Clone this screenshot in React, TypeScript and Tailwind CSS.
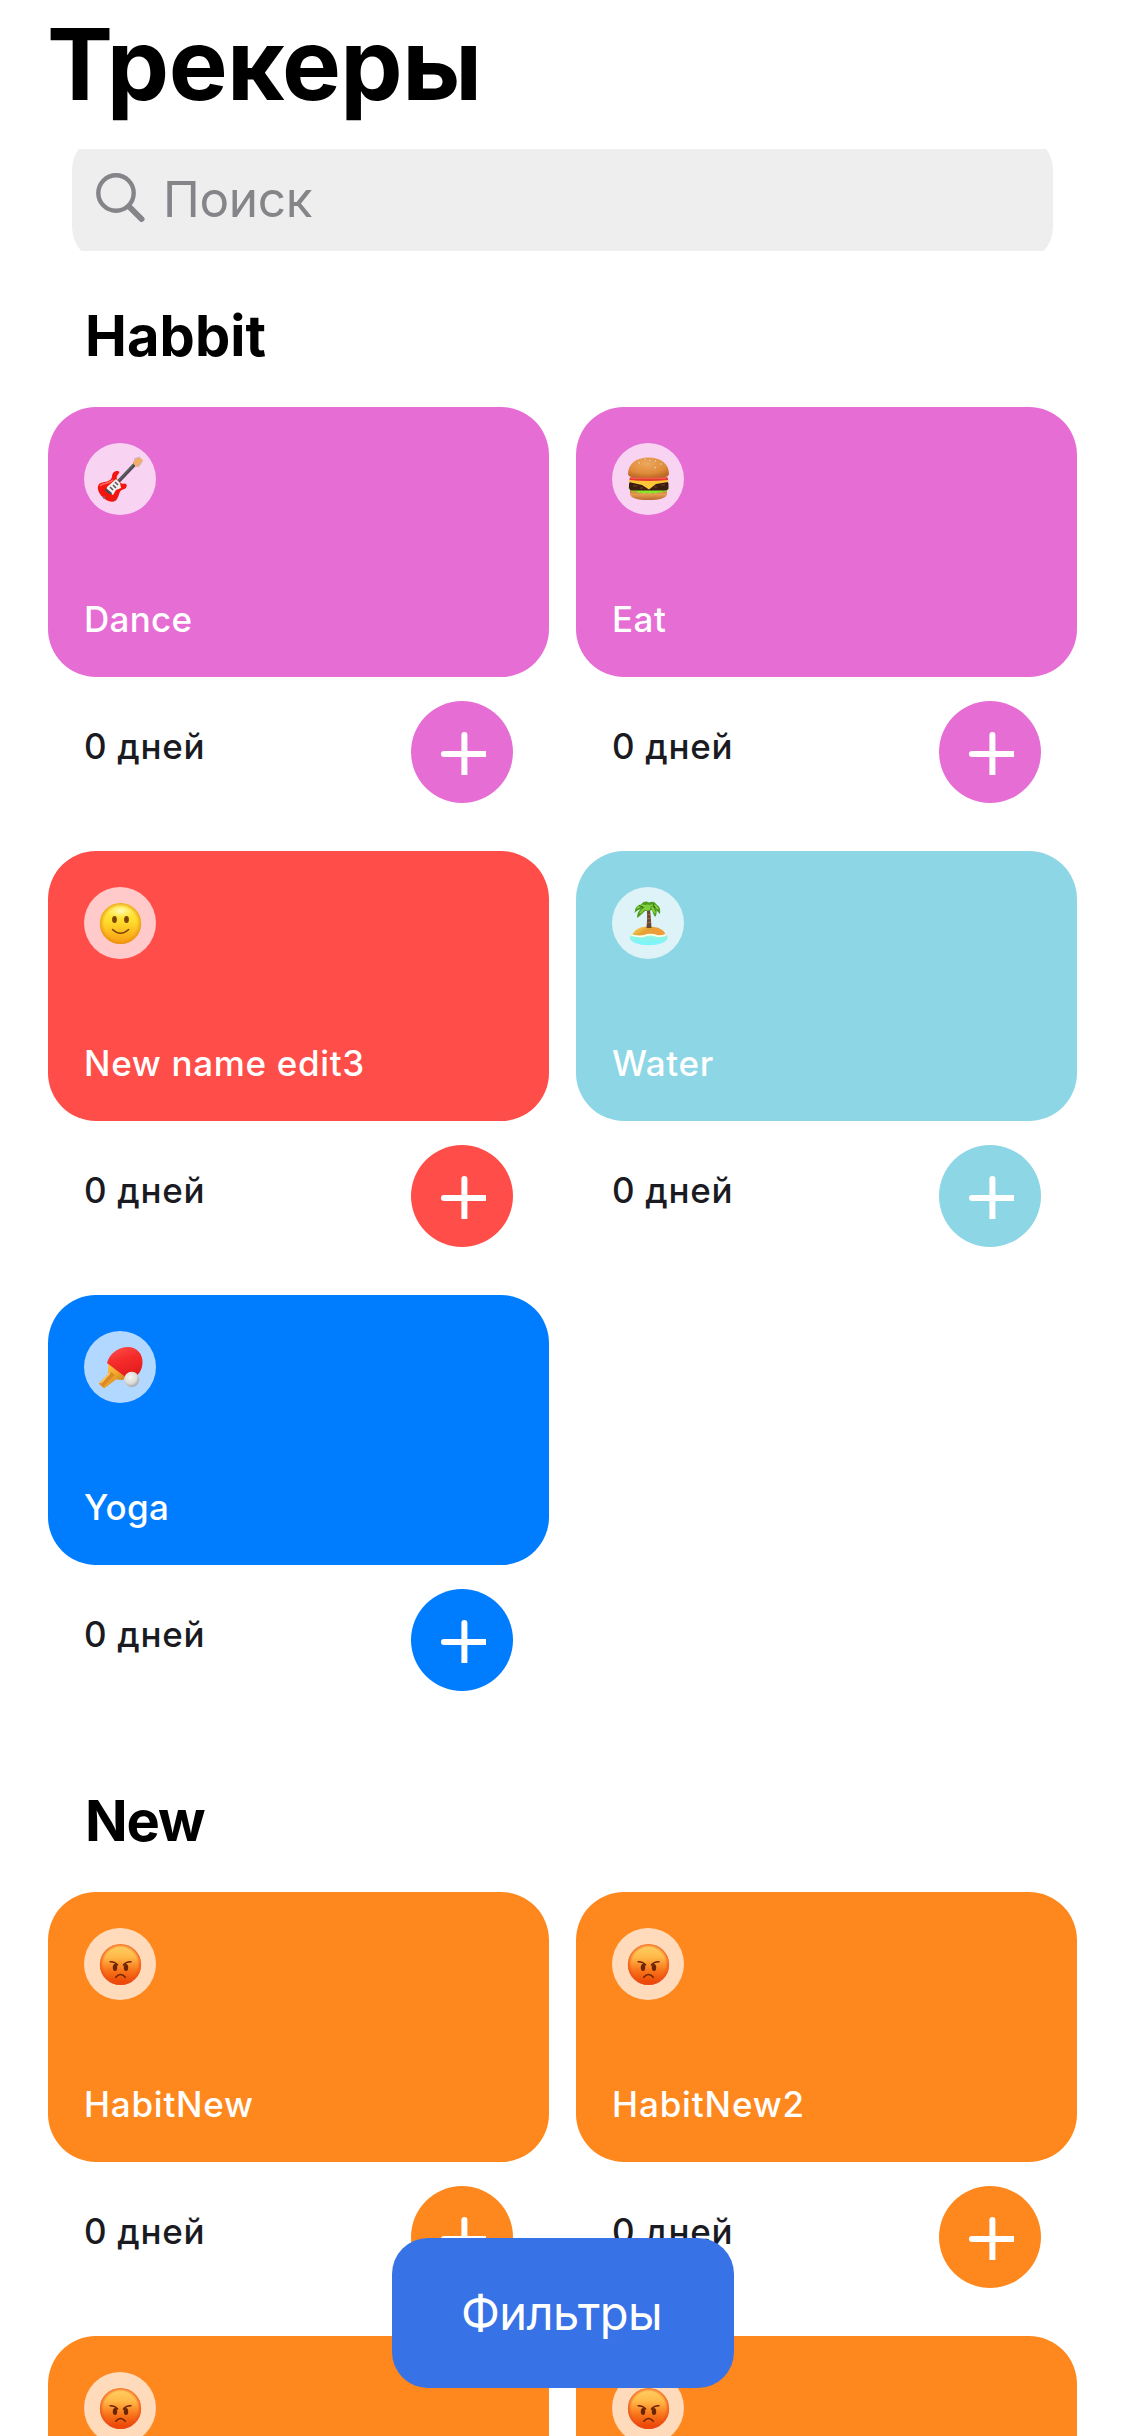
import type { ReactElement } from 'react'

type Emoji = 'guitar' | 'burger' | 'smile' | 'island' | 'paddle' | 'angry'

interface Tracker {
  name?: string
  emoji: Emoji
  color: string
  tracking?: string
}

interface Category {
  title: string
  tracking: string
  trackers: Tracker[]
}

const categories: Category[] = [
  {
    title: 'Habbit',
    tracking: 'tracking-[0.1px]',
    trackers: [
      { name: 'Dance', emoji: 'guitar', color: 'bg-[#e66dd4]', tracking: 'tracking-[0.28px]' },
      { name: 'Eat', emoji: 'burger', color: 'bg-[#e66dd4]', tracking: 'tracking-[0.5px]' },
      { name: 'New name edit3', emoji: 'smile', color: 'bg-[#ff4d4a]', tracking: 'tracking-[0.67px]' },
      { name: 'Water', emoji: 'island', color: 'bg-[#8dd6e5]', tracking: 'tracking-[0.6px]' },
      { name: 'Yoga', emoji: 'paddle', color: 'bg-[#007cff]', tracking: 'tracking-[0.3px]' },
    ],
  },
  {
    title: 'New',
    tracking: 'tracking-[-1.1px]',
    trackers: [
      { name: 'HabitNew', emoji: 'angry', color: 'bg-[#ff881e]', tracking: 'tracking-[0.75px]' },
      { name: 'HabitNew2', emoji: 'angry', color: 'bg-[#ff881e]', tracking: 'tracking-[0.85px]' },
      // The last row peeks out from under the bottom edge, so only its emoji is shown.
      { emoji: 'angry', color: 'bg-[#ff881e]' },
      { emoji: 'angry', color: 'bg-[#ff881e]' },
    ],
  },
]

const drawings: Record<Emoji, ReactElement> = {
  guitar: (
    <>
      <path d="M33 40 L52 20" stroke="#4a4a50" strokeWidth="3.4" />
      <path d="M34 38 L52 19" stroke="#77777d" strokeWidth="0.8" />
      <path d="M49 20 Q50 15 55 14 L58 16 L59 18 L57 20 Q57 23 52 24 Z" fill="#f2ad6c" />
      <path d="M50 16 L56 14 M54 24 L58 19" stroke="#c4b8c6" strokeWidth="1.2" />
      <path
        d="M28 34 C28 29 32 27 35 28.5 C36 30 34 31 33 33 C32 36 34 38 36 39.5 C38 41 39 41 41 40.5 C44 41 43 46 39 46.5 C35 48 36 50 34 54 C32 60 26 60 21 56 C15 52 12 45 15 41 C19 38 26 40 28 34 Z"
        fill="#f5150f"
      />
      <path d="M16 43 C18 40 25 41 29 37" fill="none" stroke="#ff6a5c" strokeWidth="1.6" />
      <path d="M23 44 L32 36 L36 40 L37 45 L32 47 L29 52 L22 48 Z" fill="#f4efef" />
      <path d="M26 44 L29 47 M29 42 L32 45 M31 39 L34 42" stroke="#56545c" strokeWidth="1.5" />
      <path d="M22 45 L28 50 L27 52 L21 48 Z" fill="#4d4d55" />
      <circle cx="20" cy="54.5" r="1.2" fill="#7a6a7a" />
      <circle cx="30" cy="56" r="0.9" fill="#a93838" />
    </>
  ),
  burger: (
    <>
      <defs>
        <radialGradient id="bun" cx="0.45" cy="0.3" r="0.75">
          <stop offset="0" stopColor="#f0a75a" />
          <stop offset="0.65" stopColor="#df8b3a" />
          <stop offset="1" stopColor="#b96724" />
        </radialGradient>
        <linearGradient id="heel" x1="0" y1="0" x2="0" y2="1">
          <stop offset="0" stopColor="#b8702e" />
          <stop offset="0.5" stopColor="#e69b50" />
          <stop offset="1" stopColor="#b86a2c" />
        </linearGradient>
      </defs>
      <path d="M18 46 H55 V51 Q54 57 36.500 57 Q19 57 18 51 Z" fill="url(#heel)" />
      <path
        d="M16 45 Q17 42 21 44 H53 Q57 43 57 46 Q55 47 54 49 Q51 47 49 50 Q46 48 44 51 Q41 49 38 51 Q35 49 32 51 Q29 49 26 50 Q24 47 21 49 Q19 47 16 45 Z"
        fill="#8be72c"
      />
      <rect x="17" y="38" width="39.500" height="9.500" rx="3.500" fill="#3a1c10" />
      <path d="M21 43 H25 M28 45 H31 M42 44 H45 M49 42 H53" stroke="#63361f" strokeWidth="1.4" />
      <rect x="17.500" y="34" width="38.500" height="4.500" rx="2" fill="#e23a2d" />
      <path d="M19 35 H54" stroke="#ff7760" strokeWidth="1" />
      <path d="M17 37 Q36 39 56.500 37 L56 39 L44 41 L37 46.500 L30 42 L17 39 Z" fill="#ffc638" />
      <path d="M16 31 C16 21 24 14.500 36.500 14.500 C49 14.500 57 21 57 31 Q57 34 50 34.500 H23 Q16 34 16 31 Z" fill="url(#bun)" />
      <g fill="#f3dca5" stroke="#b57b39" strokeWidth="0.4">
        <ellipse cx="27" cy="20" rx="1" ry="1.4" />
        <ellipse cx="33" cy="16" rx="1" ry="1.200" />
        <ellipse cx="36" cy="21" rx="0.900" ry="1.500" />
        <ellipse cx="38" cy="17.500" rx="1.200" ry="0.900" />
        <ellipse cx="43" cy="24.500" rx="0.900" ry="1.500" />
        <ellipse cx="43.500" cy="18" rx="1.200" ry="1" />
        <ellipse cx="49" cy="21" rx="1" ry="1.300" />
      </g>
    </>
  ),
  smile: (
    <>
      <defs>
        <linearGradient id="sun" x1="0" y1="0" x2="0" y2="1">
          <stop offset="0" stopColor="#fff04a" />
          <stop offset="0.45" stopColor="#ffdc2d" />
          <stop offset="1" stopColor="#f79a10" />
        </linearGradient>
        <radialGradient id="sunRim">
          <stop offset="0.78" stopColor="#f19a12" stopOpacity="0" />
          <stop offset="1" stopColor="#e58a10" stopOpacity="0.75" />
        </radialGradient>
        <radialGradient id="sunGlow">
          <stop offset="0" stopColor="#fffcc0" />
          <stop offset="1" stopColor="#fff36b" stopOpacity="0" />
        </radialGradient>
      </defs>
      <circle cx="36.500" cy="36.500" r="20.600" fill="url(#sun)" />
      <ellipse cx="36.500" cy="24" rx="15" ry="8" fill="url(#sunGlow)" />
      <circle cx="36.500" cy="36.500" r="20.600" fill="url(#sunRim)" />
      <ellipse cx="30.500" cy="32.500" rx="2.400" ry="3.600" fill="#7c4408" />
      <ellipse cx="42.500" cy="32.500" rx="2.400" ry="3.600" fill="#7c4408" />
      <path d="M28.500 42.500 Q36.500 50 44.700 42.500" fill="none" stroke="#7c4408" strokeWidth="1.500" strokeLinecap="round" />
    </>
  ),
  island: (
    <>
      <defs>
        <linearGradient id="sea" x1="0" y1="0" x2="0" y2="1">
          <stop offset="0" stopColor="#d8f5cf" />
          <stop offset="0.55" stopColor="#8af3ea" />
          <stop offset="1" stopColor="#79f6ff" />
        </linearGradient>
        <linearGradient id="sand" x1="0" y1="0" x2="1" y2="0.5">
          <stop offset="0" stopColor="#ffe060" />
          <stop offset="0.5" stopColor="#e5a136" />
          <stop offset="1" stopColor="#f39b3d" />
        </linearGradient>
      </defs>
      <ellipse cx="36.700" cy="50.500" rx="19" ry="7.800" fill="url(#sea)" />
      <path d="M20.500 48 C22 42 29 39.500 37 39.500 C46 39.500 53 43 53.500 48 Q49 49 45 48.500 Q38 46.500 32 49 Q27 49.500 20.500 48 Z" fill="url(#sand)" />
      <path d="M19 48 Q26 50 32 49 Q38 46.500 45 48.800 Q50 50 54 47.500" fill="none" stroke="#fdffe5" strokeWidth="1.800" />
      <path d="M34.500 41 Q35.500 32 35 23 L38 22.500 Q39 31 39.500 41 Z" fill="#6b4630" />
      <path d="M35.500 28 L38.500 27 M35.500 32 L38.700 31 M35.300 36 L39 35" stroke="#a27b5c" strokeWidth="0.900" />
      <path d="M36 23 Q28 20 22.500 26 Q23 18 29 17.500 Q32 13 37 15.500 Q42 13 45 18 Q49 20 48 27 Q45 24 44.500 23.500 Q45 28 43 30 Q41 27 40 23 L37 24 L33 24 Q30 27 25.500 31 Q24 26 29 22 Z" fill="#4f9c20" />
      <path d="M25 21 Q31 16 36 21 Q41 14 46 22 M28 26 L33 21 M43 26 L40 20" fill="none" stroke="#8ad33d" strokeWidth="1.700" />
      <circle cx="35.500" cy="20.500" r="3" fill="#7ed03f" />
      <path d="M27 18.500 L31 20 M41 17 L43 21" stroke="#28660f" strokeWidth="1" />
    </>
  ),
  paddle: (
    <>
      <defs>
        <linearGradient id="rubber" x1="0" y1="0" x2="0.4" y2="1">
          <stop offset="0" stopColor="#ff5350" />
          <stop offset="0.5" stopColor="#f42c2b" />
          <stop offset="1" stopColor="#e51c1e" />
        </linearGradient>
        <linearGradient id="wood" x1="0" y1="0" x2="1" y2="1">
          <stop offset="0" stopColor="#ffd25b" />
          <stop offset="0.5" stopColor="#f5a92b" />
          <stop offset="1" stopColor="#b66c1b" />
        </linearGradient>
        <radialGradient id="ball" cx="0.4" cy="0.35" r="0.7">
          <stop offset="0" stopColor="#f5f5f3" />
          <stop offset="0.6" stopColor="#dcdcda" />
          <stop offset="1" stopColor="#9f9d9d" />
        </radialGradient>
      </defs>
      <path d="M24 32 L42 46 L39 49 L32 48.500 L20 57.500 L14.500 52.500 L24 43 Z" fill="url(#wood)" />
      <path d="M27 41 L31 44 L19 56 L15.500 53 Z" fill="#d98a27" />
      <path d="M26 42 L17 52" stroke="#ffc65c" strokeWidth="1.500" />
      <path d="M23 32 C25 23 34 16 44 16 C53 16 59 23 58.500 32 C58 39 55 44 49 47 L42 46.500 Z" fill="url(#rubber)" />
      <circle cx="47.700" cy="48.300" r="7.600" fill="url(#ball)" />
    </>
  ),
  angry: (
    <>
      <defs>
        <linearGradient id="rage" x1="0" y1="0" x2="0" y2="1">
          <stop offset="0" stopColor="#ffd263" />
          <stop offset="0.32" stopColor="#ffb949" />
          <stop offset="0.62" stopColor="#f97a1c" />
          <stop offset="1" stopColor="#e83c02" />
        </linearGradient>
        <radialGradient id="rageRim">
          <stop offset="0.82" stopColor="#f0521a" stopOpacity="0" />
          <stop offset="1" stopColor="#ee4a18" stopOpacity="0.8" />
        </radialGradient>
      </defs>
      <circle cx="36.500" cy="36.500" r="20.600" fill="url(#rage)" />
      <circle cx="36.500" cy="36.500" r="20.600" fill="url(#rageRim)" />
      <ellipse cx="31" cy="39.500" rx="2.200" ry="3.500" fill="#6b2405" />
      <ellipse cx="42" cy="39.500" rx="2.200" ry="3.500" fill="#6b2405" />
      <path
        d="M26.200 33.700 Q31 33.500 33.500 37 M47 33.700 Q42 33.500 39.500 37 M31.800 49.200 Q36.500 43.800 41.300 49.200"
        fill="none"
        stroke="#6b2405"
        strokeWidth="1.600"
        strokeLinecap="round"
      />
    </>
  ),
}

function SearchIcon() {
  return (
    <svg className="ml-[22px] size-[54px] shrink-0" viewBox="0 0 54 54" fill="none" stroke="#858589" strokeLinecap="round">
      <circle cx="22" cy="21" r="17.700" strokeWidth="4.400" />
      <path d="M35.500 35 L47.500 47" strokeWidth="6" />
    </svg>
  )
}

function TrackerCell({ tracker }: { tracker: Tracker }) {
  return (
    <article className="h-[444px]">
      <div className={`flex h-[270px] flex-col justify-between rounded-[48px] p-9 ${tracker.color}`}>
        <div className="size-[72px] rounded-full bg-white/70">
          <svg viewBox="0 0 72 72" className="size-full">
            {drawings[tracker.emoji]}
          </svg>
        </div>
        {tracker.name && (
          <h3 className={`text-[35px] leading-[44px] font-medium text-white ${tracker.tracking}`}>{tracker.name}</h3>
        )}
      </div>
      {tracker.name && (
        <div className="flex items-start justify-between px-9 pt-6">
          <span className="pt-[23px] text-[35px] leading-[44px] font-medium tracking-[0.7px] text-[#1a1b22]">0 дней</span>
          <button className={`size-[102px] rounded-full ${tracker.color}`} aria-label="Отметить">
            <svg viewBox="0 0 102 102" className="size-full" fill="white">
              <path d="M75 49.900 V56 H33 A3 3 0 0 1 33 49.900 Z" />
              <path d="M50.400 74 V34 A3 3 0 0 1 56.400 34 V74 Z" />
            </svg>
          </button>
        </div>
      )}
    </article>
  )
}

export default function App() {
  return (
    <main className="relative h-[2436px] w-[1125px] overflow-hidden bg-white font-[Inter,sans-serif]">
      <h1 className="pl-[47px] text-[99px] leading-[128px] font-bold tracking-[-0.6px] text-black">Трекеры</h1>

      <div className="mx-[72px] mt-[21px] mb-[3px] h-[102px] overflow-hidden">
        <div className="-mt-[15px] flex h-[129px] items-center rounded-[36px] bg-[#eeeeee]">
          <SearchIcon />
          <span className="pl-[15px] text-[49.5px] leading-[60px] tracking-[-0.3px] text-[#858589]">Поиск</span>
        </div>
      </div>

      {categories.map((category) => (
        <section key={category.title} className="px-12 pt-[46px]">
          <h2 className={`mb-[35px] pl-[37px] text-[56px] leading-[72px] font-bold text-black ${category.tracking}`}>{category.title}</h2>
          <div className="grid grid-cols-2 gap-x-[27px]">
            {category.trackers.map((tracker, index) => (
              <TrackerCell key={index} tracker={tracker} />
            ))}
          </div>
        </section>
      ))}

      <button className="absolute top-[2238px] left-[392px] h-[150px] w-[342px] rounded-[36px] bg-[#3772e7] pr-[3px] text-[47px] tracking-[-0.58px] text-white">
        Фильтры
      </button>
    </main>
  )
}
